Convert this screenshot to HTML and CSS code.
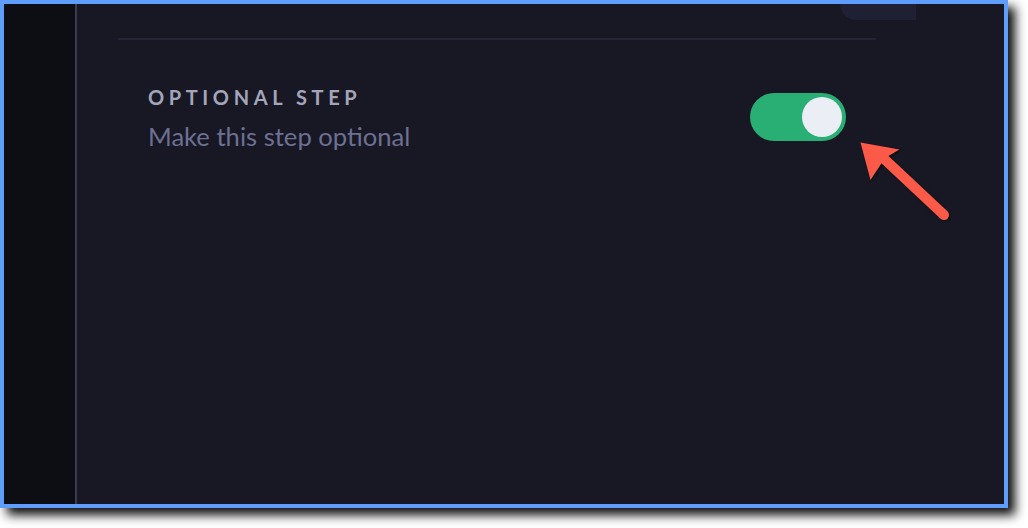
FILE: index.html
```html
<!DOCTYPE html>
<html>
<head>
<meta charset="utf-8">
<link rel="stylesheet" href="styles.css">
</head>
<body>
<div class="frame">
  <aside class="sidebar"></aside>
  <main class="main">
    <div class="topstrip"><div class="tab"></div></div>
    <div class="content">
      <div class="divider"></div>
      <div class="row">
        <div class="texts">
          <div class="title">OPTIONAL STEP</div>
          <div class="desc">Make this step optional</div>
        </div>
        <div class="toggle"><div class="knob"></div></div>
      </div>
    </div>
  </main>
  <svg class="arrow" width="120" height="110" viewBox="0 0 120 110">
    <line x1="32" y1="35" x2="96" y2="95" stroke="#fc5a48" stroke-width="10" stroke-linecap="round"/>
    <polygon points="12.5,22.5 51.5,29.5 37,38 22.5,60" fill="#fc5a48"/>
  </svg>
</div>
</body>
</html>
```
FILE: styles.css
```css
html, body {
  margin: 0;
  padding: 0;
  background: #ffffff;
}
body {
  width: 1028px;
  height: 528px;
  overflow: hidden;
  font-family: Lato, "Open Sans", sans-serif;
}
.frame {
  position: relative;
  box-sizing: border-box;
  width: 1008px;
  height: 508px;
  border: 4px solid #5e9dfb;
  display: flex;
  background: #181824;
  box-shadow: 7px 7px 10px rgba(0,0,0,0.95);
}
.sidebar {
  width: 71px;
  flex: none;
  background: #0d0d14;
  border-right: 2px solid #3a3b54;
}
.main {
  flex: 1;
  display: flex;
  flex-direction: column;
}
.topstrip {
  height: 16px;
  display: flex;
}
.tab {
  margin-left: 763px;
  width: 76px;
  height: 16px;
  background: #1f2033;
  border-bottom-left-radius: 16px;
}
.content {
  margin-left: 41px;
  width: 758px;
  padding-top: 18px;
}
.divider {
  height: 2px;
  background: #242536;
}
.row {
  display: flex;
  justify-content: space-between;
  align-items: flex-start;
  padding: 45px 30px 0 30px;
}
.title {
  font-weight: 700;
  font-size: 20px;
  letter-spacing: 4.6px;
  color: #a4a5ba;
  line-height: 24px;
}
.desc {
  margin-top: 13px;
  font-size: 25.6px;
  color: #6d7093;
  line-height: 28px;
}
.toggle {
  margin-top: 8px;
  width: 96px;
  height: 48px;
  border-radius: 24px;
  background: #29ae73;
  display: flex;
  align-items: center;
  justify-content: flex-end;
  padding-right: 4px;
  box-sizing: border-box;
}
.knob {
  width: 40px;
  height: 40px;
  border-radius: 50%;
  background: #eceef6;
}
.arrow {
  position: absolute;
  left: 844px;
  top: 116px;
  filter: drop-shadow(1px 1px 1px rgba(0,0,0,0.6));
}
```
